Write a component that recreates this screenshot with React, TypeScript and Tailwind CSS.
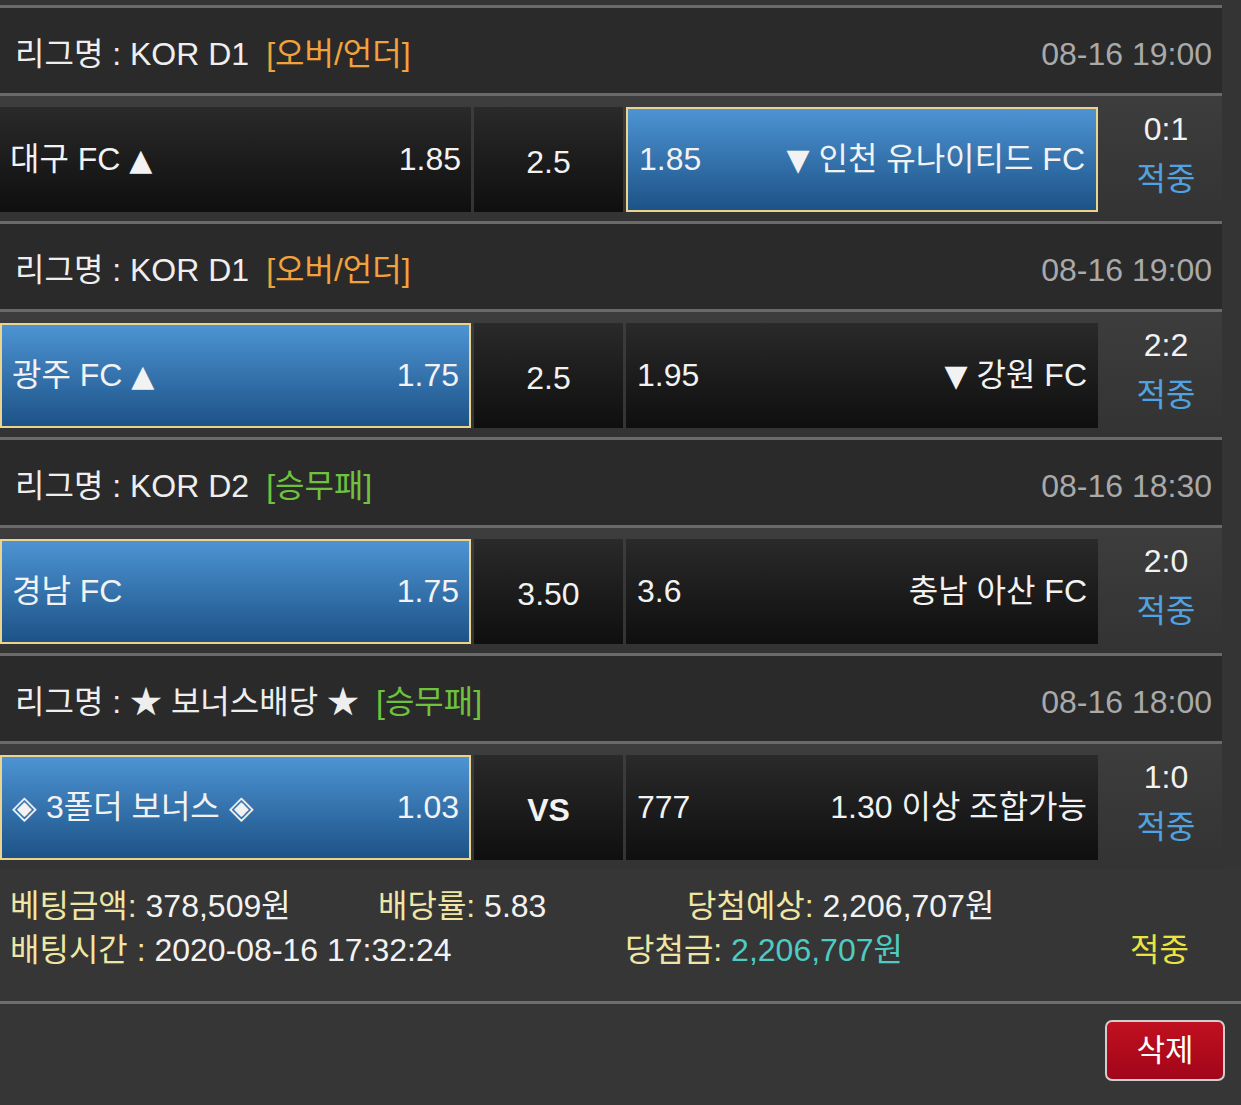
import React from 'react';

type Cell = { left: React.ReactNode; right: React.ReactNode; selected?: boolean };

type Match = {
  league: React.ReactNode;
  tag: string;
  tagColor: 'orange' | 'green';
  time: string;
  home: Cell;
  mid: string;
  midBold?: boolean;
  away: Cell;
  score: string;
};

// triangles come from DejaVu so they stay small like the reference
const Sym = ({ c }: { c: string }) => <span className="font-['DejaVu_Sans'] text-[30px]">{c}</span>;

const matches: Match[] = [
  {
    league: '리그명 : KOR D1',
    tag: '[오버/언더]',
    tagColor: 'orange',
    time: '08-16 19:00',
    home: { left: <>대구 FC <Sym c="▲" /></>, right: '1.85' },
    mid: '2.5',
    away: { left: '1.85', right: <><Sym c="▼" /> 인천 유나이티드 FC</>, selected: true },
    score: '0:1',
  },
  {
    league: '리그명 : KOR D1',
    tag: '[오버/언더]',
    tagColor: 'orange',
    time: '08-16 19:00',
    home: { left: <>광주 FC <Sym c="▲" /></>, right: '1.75', selected: true },
    mid: '2.5',
    away: { left: '1.95', right: <><Sym c="▼" /> 강원 FC</> },
    score: '2:2',
  },
  {
    league: '리그명 : KOR D2',
    tag: '[승무패]',
    tagColor: 'green',
    time: '08-16 18:30',
    home: { left: '경남 FC', right: '1.75', selected: true },
    mid: '3.50',
    away: { left: '3.6', right: '충남 아산 FC' },
    score: '2:0',
  },
  {
    league: '리그명 : ★ 보너스배당 ★',
    tag: '[승무패]',
    tagColor: 'green',
    time: '08-16 18:00',
    home: { left: '◈ 3폴더 보너스 ◈', right: '1.03', selected: true },
    mid: 'VS',
    midBold: true,
    away: { left: '777', right: '1.30 이상 조합가능' },
    score: '1:0',
  },
];

function OddsCell({ cell, width, pad }: { cell: Cell; width: string; pad: string }) {
  return (
    <div
      className={`${width} ${pad} flex h-[105px] items-center justify-between text-[#f2f2f2] ${
        cell.selected
          ? 'border-2 border-[#ecd48e] bg-gradient-to-b from-[#4d94d4] to-[#1d5387]'
          : 'bg-gradient-to-b from-[#2a2a2a] to-[#0f0f0f]'
      }`}
    >
      <span>{cell.left}</span>
      <span>{cell.right}</span>
    </div>
  );
}

function MatchBlock({ m }: { m: Match }) {
  return (
    <div className="w-[1222px]">
      <div className="h-[3px] bg-[#6a6a6a]" />
      <div className="flex h-[85px] items-center justify-between bg-[#2a2a2a] pl-[15px] pr-[10px] pt-[8px]">
        <div className="flex items-center">
          <span className="text-[#eeeeee]">{m.league}</span>
          <span className={`ml-[17px] ${m.tagColor === 'orange' ? 'text-[#f2a23c]' : 'text-[#6fc23e]'}`}>
            {m.tag}
          </span>
        </div>
        <span className="text-[#a9a9a9]">{m.time}</span>
      </div>
      <div className="h-[3px] bg-[#6a6a6a]" />
      <div className="flex h-[125px] bg-gradient-to-b from-[#3d3d3d] to-[#333333]">
        <div className="flex pt-[11px]">
          <OddsCell cell={m.home} width="w-[471px]" pad="px-[10px]" />
          <div
            className={`ml-[3px] flex h-[105px] w-[149px] items-center justify-center bg-gradient-to-b from-[#2a2a2a] to-[#0f0f0f] pt-[6px] text-[#f2f2f2] ${
              m.midBold ? 'font-bold' : ''
            }`}
          >
            {m.mid}
          </div>
          <div className="ml-[3px]">
            <OddsCell cell={m.away} width="w-[472px]" pad="px-[11px]" />
          </div>
        </div>
        <div className="flex flex-1 flex-col items-center pl-[12px] pt-[8px] leading-[50px]">
          <span className="text-[#f2f2f2]">{m.score}</span>
          <span className="text-[#4fa3e3]">적중</span>
        </div>
      </div>
    </div>
  );
}

export default function App() {
  return (
    <div className="min-h-[1105px] w-[1241px] bg-[#343434] pt-[5px] font-['Liberation_Sans','Noto_Sans_CJK_KR',sans-serif] text-[32px] leading-[1.2]">
      {matches.map((m, i) => (
        <MatchBlock key={i} m={m} />
      ))}

      <div className="bg-[#363636] pl-[10px] pt-[15px] pb-[29px] leading-[44px]">
        <div className="flex">
          <div className="w-[368px]">
            <span className="text-[#efe6a6]">베팅금액:</span>
            <span className="text-[#f2f2f2]"> 378,509원</span>
          </div>
          <div className="w-[309px]">
            <span className="text-[#efe6a6]">배당률:</span>
            <span className="text-[#f2f2f2]"> 5.83</span>
          </div>
          <div>
            <span className="text-[#efe6a6]">당첨예상:</span>
            <span className="text-[#f2f2f2]"> 2,206,707원</span>
          </div>
        </div>
        <div className="flex">
          <div className="w-[615px]">
            <span className="text-[#efe6a6]">배팅시간 :</span>
            <span className="text-[#f2f2f2]"> 2020-08-16 17:32:24</span>
          </div>
          <div className="w-[505px]">
            <span className="text-[#efe6a6]">당첨금:</span>
            <span className="text-[#4ecbc2]"> 2,206,707원</span>
          </div>
          <span className="text-[#ebe342]">적중</span>
        </div>
      </div>
      <div className="h-[3px] bg-[#6e6e6e]" />
      <div className="flex justify-end bg-[#363636] pr-[16px] pt-[16px] pb-[24px]">
        <button className="flex h-[61px] w-[120px] items-center justify-center rounded-[7px] border-2 border-[#cfcfcf] bg-gradient-to-b from-[#c0101f] to-[#a2061a] text-[31px] text-white">
          삭제
        </button>
      </div>
    </div>
  );
}
